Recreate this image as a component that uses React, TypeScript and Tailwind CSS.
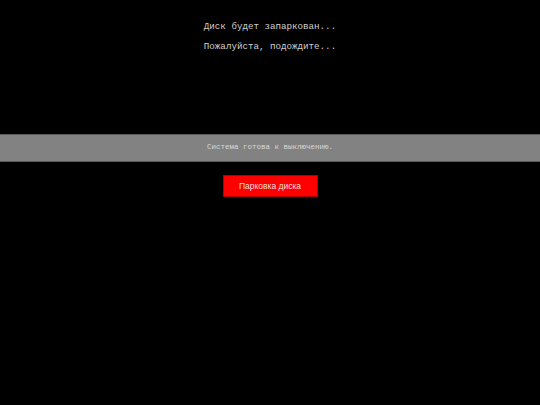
export default function App() {
  return (
    <div className="flex h-[405px] w-[540px] flex-col bg-black">
      <div className="flex flex-col items-center pt-[21px] font-['Liberation_Mono',monospace] text-[9.2px] leading-[12px] text-[#d0d0d0]">
        <p>Диск будет запаркован...</p>
        <p className="mt-[8px]">Пожалуйста, подождите...</p>
      </div>
      <div className="mt-[81px] flex h-[28px] items-center justify-center border-y border-[#5a5a5a] bg-[#828282] font-['Liberation_Mono',monospace] text-[7.5px] text-[#d8d8d8]">
        Система готова к выключению.
      </div>
      <div className="mt-[13px] flex justify-center">
        <button className="h-[22px] w-[95px] border border-[#b00000] bg-[#ff0000] font-['Liberation_Sans',Arial,sans-serif] text-[8.5px] text-[#f4dede]">
          Парковка диска
        </button>
      </div>
    </div>
  );
}
